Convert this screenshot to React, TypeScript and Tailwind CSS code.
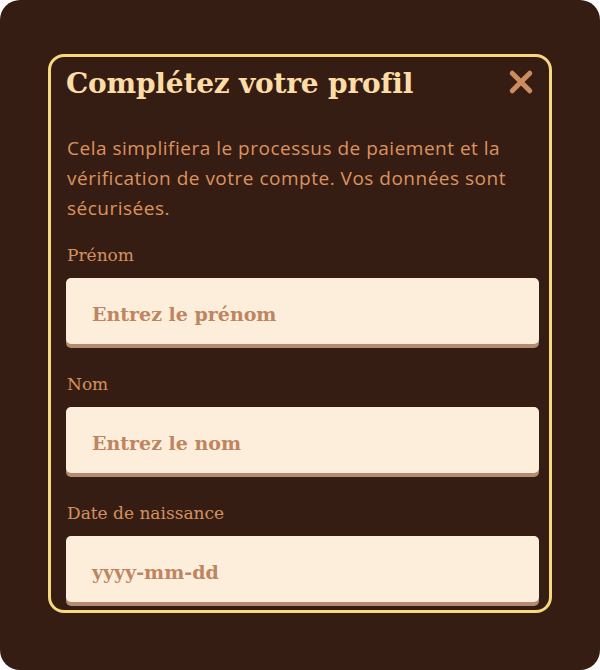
const fields = [
  { label: "Prénom", placeholder: "Entrez le prénom" },
  { label: "Nom", placeholder: "Entrez le nom" },
  { label: "Date de naissance", placeholder: "yyyy-mm-dd" },
];

export default function App() {
  return (
    <div className="h-[670px] w-[600px] bg-white">
      <div className="flex h-full w-full justify-center rounded-[20px] bg-[#361d13] pt-[54px]">
        <div className="h-[559px] w-[504px] overflow-hidden rounded-[16px] border-[3px] border-[#f7d87c] pl-[15px] pr-[10px]">
          <div className="flex items-center justify-between pt-[7px]">
            <h2 className="font-['DejaVu_Serif',serif] text-[28px] font-bold leading-[40px] tracking-[-0.2px] text-[#fddca6]">
              Complétez votre profil
            </h2>
            <button className="-mt-[4px] mr-[3px] text-[#cc8c5f]" aria-label="Fermer">
              <svg width="30" height="30" viewBox="0 0 24 24" fill="none" stroke="currentColor" strokeWidth="4" strokeLinecap="round">
                <path d="M5 5 L19 19 M19 5 L5 19" />
              </svg>
            </button>
          </div>
          <p className="mt-[29px] pl-[1px] pr-[8px] font-['Open_Sans',sans-serif] text-[19px] font-medium leading-[30px] tracking-[0.5px] text-[#dc935f]">
            Cela simplifiera le processus de paiement et la vérification de votre compte. Vos données sont sécurisées.
          </p>
          <div className="mt-[19px] flex flex-col gap-[27px]">
            {fields.map((f) => (
              <div key={f.label} className="flex flex-col">
                <label className="pl-[1px] font-['DejaVu_Serif',serif] text-[17px] leading-[26px] text-[#d4915f]">
                  {f.label}
                </label>
                <div className="mt-[10px] flex h-[66px] items-center rounded-[5px] bg-[#fdeedc] pl-[26px] pt-[6px] shadow-[0_4px_0_#b48a70]">
                  <span className="font-['DejaVu_Serif',serif] text-[19px] font-bold text-[#bd8560]">
                    {f.placeholder}
                  </span>
                </div>
              </div>
            ))}
          </div>
        </div>
      </div>
    </div>
  );
}
